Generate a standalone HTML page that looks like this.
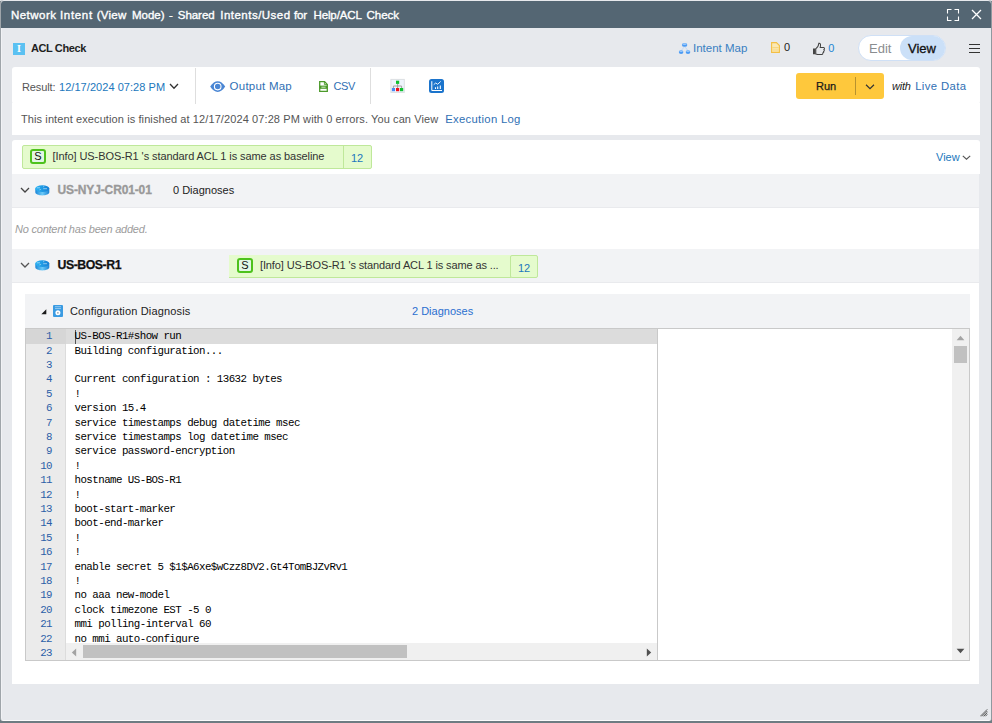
<!DOCTYPE html>
<html>
<head>
<meta charset="utf-8">
<title>Network Intent</title>
<style>
*{box-sizing:border-box;margin:0;padding:0}
html,body{width:992px;height:723px;overflow:hidden;background:#6e7c82}
body{font-family:"Liberation Sans",sans-serif;font-size:11px;color:#333;position:relative}
.abs{position:absolute}
.t{position:absolute;white-space:pre;line-height:20px;height:20px}
.tw{top:5px;color:#fff;font-size:11.5px;-webkit-text-stroke:0.35px #fff}
.blue{color:#2177bd}
#dlg{position:absolute;left:0;top:0;width:992px;height:721px;background:#e7e9ed;border-radius:4px 4px 3px 3px;overflow:hidden;border-left:1px solid #9fa5aa;border-right:1px solid #8f999f;box-shadow:inset 1px 0 0 #f1f2f5, inset 0 -1px 0 #fbfbfc}
#titlebar{position:absolute;left:0;top:1px;width:990px;height:27px;background:#546673;border-radius:3px 3px 0 0}
#topstrip{position:absolute;left:0;top:0;width:992px;height:1px;background:#dfe2e5}
.panel{position:absolute;background:#fff}
.grow{position:absolute;left:11px;width:967px;background:#f2f3f5;border-bottom:1px solid #e9eaed}
.gbox{position:absolute;background:#e5fbcd;border:1px solid #bfe89a;border-radius:2px}
.sbadge{position:absolute;width:16px;height:15px;border:2px solid #4dc21c;border-radius:3px;background:#e2f6e4;color:#111;font-size:11px;line-height:11px;text-align:center}
.code{position:absolute;font-family:"Liberation Mono",monospace;font-size:10.8px;letter-spacing:-0.55px;white-space:pre;color:#000;line-height:14.4px}
.ln{position:absolute;font-family:"Liberation Mono",monospace;font-size:10.8px;letter-spacing:-0.55px;white-space:pre;color:#2c5fa8;line-height:14.4px;text-align:right}
</style>
</head>
<body>
<div id="topstrip"></div>
<div id="dlg">
  <div id="titlebar"></div>
  <div id="ttl"><span class="t tw" style="left:10.00px;letter-spacing:0.46px">Network</span><span class="t tw" style="left:59.00px;letter-spacing:0.66px">Intent</span><span class="t tw" style="left:95.70px;letter-spacing:0.25px">(View</span><span class="t tw" style="left:131.00px;letter-spacing:-0.02px">Mode)</span><span class="t tw" style="left:168.00px;letter-spacing:0px">-</span><span class="t tw" style="left:176.75px;letter-spacing:-0.03px">Shared</span><span class="t tw" style="left:219.25px;letter-spacing:0.48px">Intents/Used</span><span class="t tw" style="left:293.00px;letter-spacing:-0.11px">for</span><span class="t tw" style="left:312.50px;letter-spacing:-0.13px">Help/ACL</span><span class="t tw" style="left:365.50px;letter-spacing:-0.02px">Check</span></div>
  <!-- fullscreen icon -->
  <svg class="abs" style="left:945px;top:8px" width="14" height="14" viewBox="0 0 14 14"><path d="M1.5 5.5V1.5H5.5M8.5 1.5H12.5V5.5M12.5 8.5V12.5H8.5M5.5 12.5H1.5V8.5" fill="none" stroke="#fff" stroke-width="1.1"/></svg>
  <!-- close icon -->
  <svg class="abs" style="left:970px;top:9px" width="11" height="11" viewBox="0 0 11 11"><path d="M1 1L10 10M10 1L1 10" fill="none" stroke="#fff" stroke-width="1.3"/></svg>

  <!-- header row -->
  <div class="abs" style="left:12px;top:43px;width:12px;height:12px;background:#5bc1f2"></div>
  <div class="abs" style="left:12px;top:43px;width:12px;height:12px;color:#fff;font-family:'Liberation Serif',serif;font-weight:bold;font-size:10px;line-height:12px;text-align:center">I</div>
  <div class="t" style="left:30px;top:38px;color:#1f1f1f;font-weight:bold;font-size:11px;letter-spacing:-0.4px">ACL Check</div>

  <!-- intent map -->
  <svg class="abs" style="left:677px;top:42px" width="14" height="13" viewBox="0 0 14 13">
    <path d="M6.6 4.5L3.2 8.6M6.6 4.5L10 8.6" stroke="#b7d6fa" stroke-width="0.8" fill="none"/>
    <ellipse cx="6.6" cy="2.9" rx="2.7" ry="1.9" fill="#4b9bf5"/><ellipse cx="6.6" cy="2.1" rx="2.1" ry="0.9" fill="#9ccafb"/>
    <ellipse cx="3.1" cy="10.1" rx="2.3" ry="1.9" fill="#4b9bf5"/><ellipse cx="3.1" cy="9.2" rx="1.8" ry="0.8" fill="#9ccafb"/>
    <ellipse cx="10" cy="10.1" rx="2.3" ry="1.9" fill="#4b9bf5"/><ellipse cx="10" cy="9.2" rx="1.8" ry="0.8" fill="#9ccafb"/>
  </svg>
  <div class="t" style="left:692px;top:38px;color:#3a7fc2;font-size:11.5px">Intent Map</div>
  <!-- doc icon -->
  <svg class="abs" style="left:770px;top:42px" width="9" height="11" viewBox="0 0 9 11"><path d="M0.6 0.6H5.4L8.4 3.6V10.4H0.6Z" fill="#fbe9b6" stroke="#f3bf45" stroke-width="1.1"/><path d="M1.2 5.6H7.8M1.2 8H7.8" stroke="#f7d682" stroke-width="1.2"/></svg>
  <div class="t" style="left:783px;top:37px;color:#222;font-size:11px">0</div>
  <!-- thumb icon -->
  <svg class="abs" style="left:811.2px;top:41.6px" width="14" height="13.6" viewBox="0 0 14 13" preserveAspectRatio="none"><path d="M1 6.2H3.6V11.6H1Z" fill="#444"/><path d="M3.8 6.4C5.6 5.4 6.6 3.6 6.8 1.2C8.4 0.8 9 2.6 8.2 5.2H11.6C12.8 5.4 12.6 7 12 7.2C12.6 7.8 12.2 8.8 11.6 9C12 9.8 11.4 10.6 10.8 10.6C11 11.4 10.4 12 9.6 12H6C5 12 4.6 11.4 3.8 11.4Z" fill="none" stroke="#444" stroke-width="1"/></svg>
  <div class="t" style="left:827.2px;top:38px;font-size:11px" ><span style="color:#2285d2">0</span></div>

  <!-- edit/view toggle -->
  <div class="abs" style="left:857px;top:35px;width:88px;height:26px;border-radius:13px;background:#fff;border:1px solid #cfe0f6"></div>
  <div class="abs" style="left:899px;top:36px;width:45px;height:24px;border-radius:12px;background:#cbe0f8"></div>
  <div class="t" style="left:868px;top:39px;font-size:13px;color:#8a8d90">Edit</div>
  <div class="t" style="left:907px;top:39px;font-size:13px;color:#111;-webkit-text-stroke:0.3px #111">View</div>
  <!-- hamburger -->
  <div class="abs" style="left:968px;top:44px;width:11px;height:1px;background:#333"></div>
  <div class="abs" style="left:968px;top:48px;width:11px;height:1px;background:#333"></div>
  <div class="abs" style="left:968px;top:52px;width:11px;height:1px;background:#333"></div>

  <!-- toolbar panel -->
  <div class="panel" style="left:11px;top:67px;width:968px;height:37px;border-radius:3px"></div>
  <div class="panel" style="left:11px;top:103px;width:968px;height:32px"></div>
  <div class="t" style="left:21px;top:77px;color:#555;font-size:11px;letter-spacing:-0.1px">Result:</div>
  <div class="t" style="left:58px;top:77px;font-size:11px;letter-spacing:0.05px"><span class="blue">12/17/2024 07:28 PM</span></div>
  <svg class="abs" style="left:168px;top:83px" width="10" height="7" viewBox="0 0 10 7"><path d="M1 1L5 5.2L9 1" fill="none" stroke="#333" stroke-width="1.3"/></svg>
  <div class="abs" style="left:194px;top:68px;width:1px;height:36px;background:#dedede"></div>
  <!-- eye -->
  <svg class="abs" style="left:208.8px;top:80.8px" width="16" height="12" viewBox="0 0 16 12"><path d="M0.2 5.6C2.6 1.9 5 0.2 7.7 0.2C10.4 0.2 12.8 1.9 15.2 5.6C12.8 9.3 10.4 11 7.7 11C5 11 2.6 9.3 0.2 5.6Z" fill="#4a86d4"/><circle cx="7.7" cy="5.6" r="3.3" fill="none" stroke="#fff" stroke-width="1.1"/></svg>
  <div class="t" style="left:228.6px;top:76px;font-size:11.5px;color:#2f6fb4;letter-spacing:0.23px">Output Map</div>
  <!-- csv icon -->
  <svg class="abs" style="left:318px;top:81px" width="9" height="11" viewBox="0 0 9 11"><path d="M0.7 0.7H5.6L8.3 3.4V10.3H0.7Z" fill="#fff" stroke="#4c9a2a" stroke-width="1.3"/><rect x="0.7" y="4.6" width="7.6" height="3.2" fill="#4c9a2a"/><path d="M5.4 0.7V3.6H8.3" fill="none" stroke="#4c9a2a" stroke-width="0.9"/><path d="M2.4 6.2H6.6" stroke="#cfe8c2" stroke-width="1"/></svg>
  <div class="t" style="left:332.5px;top:76px;font-size:11px;color:#2f6fb4;letter-spacing:-0.4px">CSV</div>
  <div class="abs" style="left:369px;top:68px;width:1px;height:36px;background:#dedede"></div>
  <!-- tree icon -->
  <svg class="abs" style="left:389px;top:78px" width="16" height="16" viewBox="0 0 16 16"><rect x="0.9" y="1.4" width="13.4" height="13" fill="#eef4fc" stroke="#dcdfe3" stroke-width="1"/><path d="M7.6 5.9V10M3.4 10V8H11.6V10" fill="none" stroke="#9a9a9a" stroke-width="0.9"/><rect x="6" y="2.7" width="3.2" height="3.2" fill="#10c030"/><rect x="1.9" y="10" width="3.1" height="3.2" fill="#4a8af4"/><rect x="6" y="10" width="3.2" height="3.2" fill="#f0101c"/><rect x="10" y="10" width="3.2" height="3.2" fill="#10c030"/></svg>
  <!-- chart icon -->
  <svg class="abs" style="left:428.2px;top:79px" width="15" height="14" viewBox="0 0 15 14"><rect x="0" y="0" width="15" height="14" rx="2.5" fill="#1b74cc"/><path d="M2.8 2.2V11.5H13" fill="none" stroke="#fff" stroke-width="1"/><path d="M4.7 5.7L6.7 4L8.7 5.3L11.7 2.4" fill="none" stroke="#fff" stroke-width="0.9"/><path d="M6.5 8.3V10M8.7 7.5V10M11.3 6.4V10" stroke="#fff" stroke-width="1.1"/></svg>

  <!-- run -->
  <div class="abs" style="left:795px;top:73px;width:88px;height:26px;border-radius:3px;background:#fec83c"></div>
  <div class="t" style="left:815px;top:76px;font-size:11px;color:#1a1a1a;-webkit-text-stroke:0.25px #1a1a1a">Run</div>
  <div class="abs" style="left:854px;top:77px;width:1px;height:18px;background:#b8922e"></div>
  <svg class="abs" style="left:864px;top:84px" width="10" height="6" viewBox="0 0 10 6"><path d="M1 0.8L5 4.6L9 0.8" fill="none" stroke="#333" stroke-width="1.2"/></svg>
  <div class="t" style="left:891px;top:76px;font-size:11px;font-style:italic;color:#222;letter-spacing:-0.25px">with</div>
  <div class="t" style="left:914.2px;top:76px;font-size:11.3px;color:#2f6fb4;letter-spacing:0.38px">Live Data</div>

  <!-- message -->
  <div class="t" style="left:20px;top:109px;font-size:11px;color:#555;letter-spacing:0.1px">This intent execution is finished at 12/17/2024 07:28 PM with 0 errors. You can View</div>
  <div class="t" style="left:444.2px;top:109px;font-size:11.3px;color:#2f6fb4;letter-spacing:0.3px">Execution Log</div>

  <!-- content panel -->
  <div class="panel" style="left:11px;top:140px;width:968px;height:544px;border-radius:3px 3px 0 0"></div>
  <div class="gbox" style="left:21px;top:145px;width:350px;height:24px"></div>
  <div class="abs" style="left:342px;top:145px;width:1px;height:24px;background:#bfe89a"></div>
  <div class="sbadge" style="left:29px;top:149px">S</div>
  <div class="t" style="left:51.5px;top:146px;font-size:11px;color:#333;letter-spacing:-0.08px">[Info] US-BOS-R1 's standard ACL 1 is same as baseline</div>
  <div class="t" style="left:350px;top:148px;font-size:11px"><span class="blue">12</span></div>
  <div class="t" style="left:935px;top:147px;font-size:11px"><span class="blue">View</span></div>
  <svg class="abs" style="left:960.6px;top:155px" width="9" height="6" viewBox="0 0 9 6"><path d="M0.8 0.8L4.5 4.2L8.2 0.8" fill="none" stroke="#555" stroke-width="1.15"/></svg>

  <div class="abs" style="left:978px;top:174px;width:1px;height:510px;background:#e7e9ed"></div>
  <!-- row 1 -->
  <div class="grow" style="top:174px;height:34px"></div>
  <svg class="abs" style="left:19px;top:187px" width="10" height="7" viewBox="0 0 10 7"><path d="M1 1L5 5L9 1" fill="none" stroke="#444" stroke-width="1.3"/></svg>
  <svg class="abs router" style="left:33.7px;top:184.7px" width="15" height="11" viewBox="0 0 15 11"><defs><linearGradient id="rb184" x1="0" x2="1" y1="0" y2="0"><stop offset="0" stop-color="#1a86d8"/><stop offset="0.5" stop-color="#6ccaf8"/><stop offset="1" stop-color="#1a82d4"/></linearGradient><linearGradient id="rt184" x1="0" x2="1" y1="0" y2="0"><stop offset="0" stop-color="#2ab4f3"/><stop offset="1" stop-color="#167fd4"/></linearGradient></defs><path d="M0.3 3.6V7.3C0.3 9.2 3.4 10.4 7.3 10.4C11.2 10.4 14.3 9.2 14.3 7.3V3.6Z" fill="url(#rb184)"/><ellipse cx="7.3" cy="3.6" rx="7" ry="3.4" fill="url(#rt184)"/><path d="M1.8 2.8H5M4.4 4.9L5.8 4.4M8.2 1.7L9.2 1.5M8.2 3.7H12" stroke="#d4ecfb" stroke-width="0.6" fill="none"/></svg>
  <div class="t" style="left:56.5px;top:180px;font-size:12px;font-weight:bold;color:#999;letter-spacing:-0.13px;-webkit-text-stroke:0.3px #999">US-NYJ-CR01-01</div>
  <div class="t" style="left:172px;top:180px;font-size:11px;color:#222">0 Diagnoses</div>
  <div class="t" style="left:14px;top:219px;font-size:11px;font-style:italic;color:#9c9c9c;letter-spacing:-0.22px">No content has been added.</div>

  <!-- row 2 -->
  <div class="grow" style="top:249px;height:34px"></div>
  <svg class="abs" style="left:19px;top:262px" width="10" height="7" viewBox="0 0 10 7"><path d="M1 1L5 5L9 1" fill="none" stroke="#555" stroke-width="1.3"/></svg>
  <svg class="abs router" style="left:33.7px;top:259.7px" width="15" height="11" viewBox="0 0 15 11"><defs><linearGradient id="rb259" x1="0" x2="1" y1="0" y2="0"><stop offset="0" stop-color="#1a86d8"/><stop offset="0.5" stop-color="#6ccaf8"/><stop offset="1" stop-color="#1a82d4"/></linearGradient><linearGradient id="rt259" x1="0" x2="1" y1="0" y2="0"><stop offset="0" stop-color="#2ab4f3"/><stop offset="1" stop-color="#167fd4"/></linearGradient></defs><path d="M0.3 3.6V7.3C0.3 9.2 3.4 10.4 7.3 10.4C11.2 10.4 14.3 9.2 14.3 7.3V3.6Z" fill="url(#rb259)"/><ellipse cx="7.3" cy="3.6" rx="7" ry="3.4" fill="url(#rt259)"/><path d="M1.8 2.8H5M4.4 4.9L5.8 4.4M8.2 1.7L9.2 1.5M8.2 3.7H12" stroke="#d4ecfb" stroke-width="0.6" fill="none"/></svg>
  <div class="t" style="left:56.5px;top:255px;font-size:12.3px;font-weight:bold;color:#111;letter-spacing:-0.45px;-webkit-text-stroke:0.25px #111">US-BOS-R1</div>
  <div class="abs" style="left:228px;top:255px;width:282px;height:23px;background:#e5fbcd;border-bottom:1px solid #bfe89a"></div>
  <div class="gbox" style="left:509px;top:255px;width:28px;height:23px"></div>
  <div class="sbadge" style="left:236px;top:258px">S</div>
  <div class="t" style="left:259px;top:255px;font-size:11px;color:#333;letter-spacing:-0.12px">[Info] US-BOS-R1 's standard ACL 1 is same as ...</div>
  <div class="t" style="left:517px;top:258px;font-size:11px"><span class="blue">12</span></div>

  <!-- config diagnosis header -->
  <div class="abs" style="left:24px;top:294px;width:945px;height:35px;background:#f2f3f5"></div>
  <svg class="abs" style="left:39.8px;top:308.8px" width="6" height="6" viewBox="0 0 6 6"><path d="M5.3 0.2V5.2H0.3Z" fill="#1a1a1a"/></svg>
  <svg class="abs" style="left:52px;top:305px" width="11" height="12" viewBox="0 0 11 12"><rect x="0" y="0" width="10" height="12" rx="1" fill="#3a9be2"/><path d="M2 1.7H8M2 3.6H8" stroke="#a9d4f4" stroke-width="0.8"/><circle cx="4.9" cy="7.8" r="2.5" fill="#fff"/><circle cx="4.9" cy="7.8" r="0.9" fill="#9aa4ad"/></svg>
  <div class="t" style="left:69px;top:301px;font-size:11px;color:#222;letter-spacing:0.16px">Configuration Diagnosis</div>
  <div class="t" style="left:411px;top:301px;font-size:11px"><span style="color:#2a6fd0">2 Diagnoses</span></div>

  <!-- code block -->
  <div class="abs" id="codebox" style="left:24px;top:328px;width:945px;height:333px;border:1px solid #c9c9c9;background:#fff;overflow:hidden">
    <div class="abs" style="left:0;top:0;width:40px;height:331px;background:#ebebeb;border-right:1px solid #dcdcdc"></div>
    <div class="abs" style="left:0;top:0;width:631px;height:15px;background:#dcdcdc"></div>
    <div class="abs" style="left:0;top:0;width:40px;height:15px;background:#d6d6d6"></div>
    <div class="ln" style="left:-1px;top:0.1px;width:27px">1
2
3
4
5
6
7
8
9
10
11
12
13
14
15
16
17
18
19
20
21
22
23</div>
    <div class="abs" style="left:49px;top:1px;width:1px;height:14px;background:#555"></div>
    <div class="code" style="left:48.5px;top:0.1px">US-BOS-R1#show run
Building configuration...

Current configuration : 13632 bytes
!
version 15.4
service timestamps debug datetime msec
service timestamps log datetime msec
service password-encryption
!
hostname US-BOS-R1
!
boot-start-marker
boot-end-marker
!
!
enable secret 5 $1$A6xe$wCzz8DV2.Gt4TomBJZvRv1
!
no aaa new-model
clock timezone EST -5 0
mmi polling-interval 60
no mmi auto-configure
</div>
    <!-- h scrollbar -->
    <div class="abs" style="left:40px;top:314px;width:591px;height:17px;background:#f0f0f0"></div>
    <svg class="abs" style="left:45px;top:319px" width="6" height="9" viewBox="0 0 6 9"><path d="M5.2 0.6V8.4L0.8 4.5Z" fill="#a3a3a3"/></svg>
    <div class="abs" style="left:57px;top:316px;width:324px;height:13px;background:#c1c1c1"></div>
    <svg class="abs" style="left:620px;top:319px" width="6" height="9" viewBox="0 0 6 9"><path d="M0.8 0.6V8.4L5.2 4.5Z" fill="#505050"/></svg>
    <!-- divider -->
    <div class="abs" style="left:631px;top:0;width:1px;height:331px;background:#c9c9c9"></div>
    <!-- v scrollbar -->
    <div class="abs" style="left:926px;top:0;width:17px;height:331px;background:#f0f0f0"></div>
    <svg class="abs" style="left:930px;top:6px" width="9" height="6" viewBox="0 0 9 6"><path d="M0.6 5.2H8.4L4.5 0.8Z" fill="#a3a3a3"/></svg>
    <div class="abs" style="left:928px;top:17px;width:13px;height:17px;background:#c1c1c1"></div>
    <svg class="abs" style="left:930px;top:319px" width="9" height="6" viewBox="0 0 9 6"><path d="M0.6 0.8H8.4L4.5 5.2Z" fill="#505050"/></svg>
  </div>

  <!-- resize grip -->
  <svg class="abs" style="left:979px;top:709px" width="8" height="8" viewBox="0 0 8 8"><path d="M7.3 0.3L0.3 7.3M7.3 2L2 7.3M7.3 3.7L3.7 7.3M7.3 5.4L5.4 7.3" stroke="#444" stroke-width="0.85"/></svg>
</div>
</body>
</html>
